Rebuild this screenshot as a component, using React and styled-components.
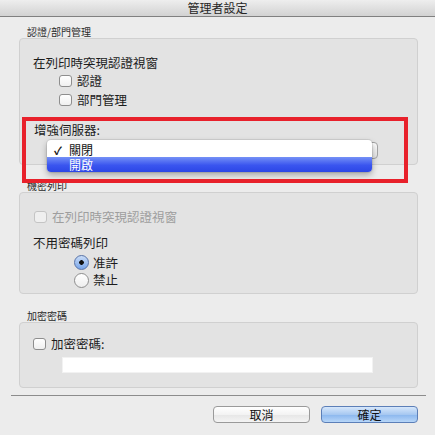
import React from "react";
import styled, { createGlobalStyle } from "styled-components";

const GlobalStyle = createGlobalStyle`
  html, body {
    margin: 0;
    padding: 0;
    background: #ececec;
  }
  body {
    font-family: "Noto Sans CJK TC", "Noto Sans", "Liberation Sans", sans-serif;
    color: #1c1c1c;
  }
  * { box-sizing: border-box; }
`;

const Window = styled.div`
  width: 435px;
  height: 435px;
  background: #ececec;
  overflow: hidden;
`;

const TitleBar = styled.div`
  height: 17px;
  border-bottom: 1px solid #808080;
  background: linear-gradient(#eeeeee, #d2d2d2);
  font-size: 12px;
  line-height: 16px;
  text-align: center;
  color: #262626;
`;

const Content = styled.div`
  position: relative;
  display: flow-root;
  padding: 0 17px 0 19px;
`;

const SectionLabel = styled.div`
  height: 12px;
  line-height: 12px;
  font-size: 10px;
  margin: ${(p) => p.$top}px 0 0 8px;
  color: #2a2a2a;
`;

const Group = styled.div`
  background: #e3e3e3;
  border: 1px solid #d0d0d0;
  border-radius: 4px;
  padding: ${(p) => p.$pad};
  height: ${(p) => p.$h}px;
`;

const Heading = styled.div`
  font-size: 12.5px;
  line-height: 17px;
  height: ${(p) => p.$h || 17}px;
  margin: ${(p) => p.$top || 0}px 0 0 ${(p) => p.$left || 13}px;
`;

const Row = styled.div`
  display: flex;
  align-items: center;
  height: ${(p) => p.$h || 19}px;
  margin: ${(p) => p.$top || 0}px 0 0 ${(p) => p.$left}px;
  font-size: 12.5px;
  line-height: 16px;
  color: ${(p) => (p.$disabled ? "#9e9e9e" : "#1c1c1c")};
`;

const Box = styled.span`
  width: 13px;
  height: 12px;
  border: 1px solid ${(p) => (p.$disabled ? "#c4c4c4" : "#8e8e8e")};
  border-radius: 3px;
  background: ${(p) =>
    p.$disabled ? "#efefef" : "linear-gradient(#ffffff, #f0f0f0)"};
  margin-right: ${(p) => p.$gap || 5}px;
  flex: none;
`;

const Radio = styled.span`
  width: 15px;
  height: 15px;
  border-radius: 50%;
  border: 1px solid ${(p) => (p.$on ? "#5873a8" : "#8e8e8e")};
  background: ${(p) =>
    p.$on
      ? "radial-gradient(circle, #111 0 2px, transparent 2.6px), linear-gradient(#c9dcf7, #79a6ea)"
      : "linear-gradient(#ffffff, #eeeeee)"};
  margin-right: 4px;
  flex: none;
`;

const PopupWrap = styled.div`
  position: relative;
  margin: 3px 0 0 27px;
  width: 331px;
  height: 17px;
`;

const PopupButton = styled.div`
  height: 17px;
  border: 1px solid #a3a3a3;
  border-radius: 4px;
  background: linear-gradient(#fdfdfd, #e2e2e2);
`;

const Menu = styled.div`
  position: absolute;
  top: -2px;
  left: 0;
  width: 325px;
  background: #ffffff;
  border-radius: 4px;
  overflow: hidden;
  box-shadow: 0 3px 6px rgba(0, 0, 0, 0.3), 0 0 0 1px rgba(0, 0, 0, 0.08);
  padding-top: 2px;
  z-index: 2;
`;

const MenuItem = styled.div`
  display: flex;
  align-items: center;
  height: 15px;
  font-size: 12px;
  line-height: 14px;
  padding-left: 7px;
  color: ${(p) => (p.$active ? "#ffffff" : "#111111")};
  background: ${(p) =>
    p.$active ? "linear-gradient(#7591f6, #3a55ef 55%, #2c46e6)" : "transparent"};
`;

const Check = styled.span`
  width: 15px;
  font-size: 11px;
  font-weight: bold;
`;

const Highlight = styled.div`
  position: absolute;
  left: 22px;
  top: 100px;
  width: 386px;
  height: 66px;
  border: 4px solid #e8212b;
  z-index: 3;
  pointer-events: none;
`;

const TextField = styled.div`
  margin: 4px 0 0 42px;
  width: 311px;
  height: 16px;
  background: #ffffff;
  border: 1px solid #f2f2f2;
`;

const Separator = styled.div`
  margin: 7px 9px 0 11px;
  border-top: 1px solid #8c8c8c;
`;

const ButtonBar = styled.div`
  display: flex;
  justify-content: flex-end;
  gap: 11px;
  padding: 10px 17px 0 0;
`;

const Button = styled.div`
  width: 97px;
  height: 17px;
  border-radius: 4px;
  font-size: 12px;
  line-height: 15px;
  text-align: center;
  border: 1px solid ${(p) => (p.$primary ? "#5c7fb8" : "#9a9a9a")};
  background: ${(p) =>
    p.$primary
      ? "linear-gradient(#d6e7fb, #a7c8f1 50%, #8ab6ee 51%, #b7d6f8)"
      : "linear-gradient(#ffffff, #f3f3f3 50%, #e6e6e6 51%, #f4f4f4)"};
  color: #111;
`;

export default function App() {
  return (
    <Window>
      <GlobalStyle />
      <TitleBar>管理者設定</TitleBar>
      <Content>
        <SectionLabel $top={9}>認證/部門管理</SectionLabel>
        <Group $pad="15px 0 0 0" $h={127}>
          <Heading>在列印時突現認證視窗</Heading>
          <Row $left={39}>
            <Box />
            認證
          </Row>
          <Row $left={39}>
            <Box />
            部門管理
          </Row>
          <Heading $top={12} $h={18} $left={14}>
            增強伺服器:
          </Heading>
          <PopupWrap>
            <PopupButton />
            <Menu>
              <MenuItem>
                <Check>✓</Check>關閉
              </MenuItem>
              <MenuItem $active>
                <Check />
                開啟
              </MenuItem>
            </Menu>
          </PopupWrap>
        </Group>
        <Highlight />

        <SectionLabel $top={15}>機密列印</SectionLabel>
        <Group $pad="15px 0 0 0" $h={102}>
          <Row $left={14} $h={18} $disabled>
            <Box $disabled />
            在列印時突現認證視窗
          </Row>
          <Heading $top={8} $h={18}>
            不用密碼列印
          </Heading>
          <Row $left={54} $h={17} $top={2}>
            <Radio $on />
            准許
          </Row>
          <Row $left={54} $h={18}>
            <Radio />
            禁止
          </Row>
        </Group>

        <SectionLabel $top={16}>加密密碼</SectionLabel>
        <Group $pad="12px 0 0 0" $h={66}>
          <Row $left={13} $h={18}>
            <Box $gap={5} />
            加密密碼:
          </Row>
          <TextField />
        </Group>
      </Content>
      <Separator />
      <ButtonBar>
        <Button>取消</Button>
        <Button $primary>確定</Button>
      </ButtonBar>
    </Window>
  );
}
